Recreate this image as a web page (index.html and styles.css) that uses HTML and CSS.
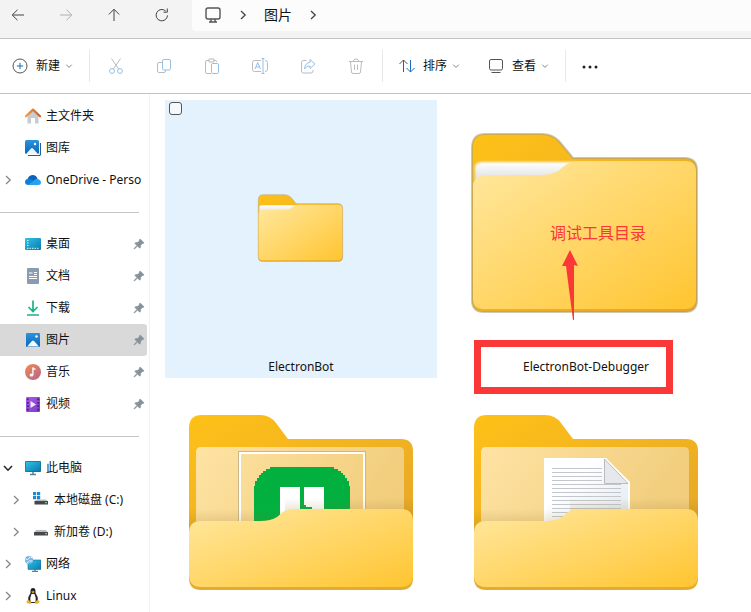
FILE: index.html
```html
<!DOCTYPE html>
<html lang="zh-CN">
<head>
<meta charset="utf-8">
<title>图片</title>
<link rel="stylesheet" href="styles.css">
</head>
<body>
<svg class="defs" aria-hidden="true">
  <defs>
    <linearGradient id="back" x1="0" y1="0" x2="1" y2="1"><stop offset="0" stop-color="#fec117"/><stop offset="1" stop-color="#e5a52a"/></linearGradient>
    <linearGradient id="front" x1="0" y1="0" x2="1" y2="1"><stop offset="0" stop-color="#ffe8a0"/><stop offset="1" stop-color="#ffc530"/></linearGradient>
    <linearGradient id="inner" x1="0" y1="0" x2="1" y2="0.3"><stop offset="0" stop-color="#fee3a4"/><stop offset="1" stop-color="#f1cd7c"/></linearGradient>
    <linearGradient id="shade" x1="0" y1="0" x2="0" y2="1"><stop offset="0" stop-color="#8a6a20" stop-opacity="0"/><stop offset="1" stop-color="#8a6a20" stop-opacity="0.3"/></linearGradient>
    <linearGradient id="strip" x1="0" y1="0" x2="0" y2="1"><stop offset="0" stop-color="#ffffff"/><stop offset="1" stop-color="#dcdcde"/></linearGradient>
    <linearGradient id="sheet" x1="0" y1="0" x2="1" y2="1"><stop offset="0.3" stop-color="#ffffff"/><stop offset="1" stop-color="#dde6f0"/></linearGradient>
    <linearGradient id="blue" x1="0" y1="0" x2="1" y2="1"><stop offset="0" stop-color="#2fc3e8"/><stop offset="1" stop-color="#0b78ae"/></linearGradient>
    <linearGradient id="photo" x1="0" y1="0" x2="0" y2="1"><stop offset="0" stop-color="#2a94df"/><stop offset="1" stop-color="#0c65b3"/></linearGradient>
    <linearGradient id="roof" x1="0" y1="0" x2="1" y2="0"><stop offset="0" stop-color="#f09a4a"/><stop offset="1" stop-color="#c8602c"/></linearGradient>
    <linearGradient id="music" x1="0" y1="0" x2="1" y2="1"><stop offset="0" stop-color="#f08a52"/><stop offset="1" stop-color="#b4648e"/></linearGradient>
    <linearGradient id="film" x1="0" y1="0" x2="1" y2="1"><stop offset="0" stop-color="#a95cec"/><stop offset="1" stop-color="#7a3cc4"/></linearGradient>
    <filter id="soft" x="-10%" y="-30%" width="120%" height="160%"><feGaussianBlur stdDeviation="1"/></filter>

    <symbol id="folder" viewBox="0 0 256 256" overflow="visible">
      <path d="M14 48Q14 34 27 34H84Q94 34 101 41L115 58H228Q239 59 239 70V200Q239 212 227 212H26Q14 212 14 200Z" fill="url(#back)" stroke="#a69a79" stroke-opacity="0.55" stroke-width="2"/>
      <path d="M17 82V68Q17 62 24 62H118V82Z" fill="url(#strip)" filter="url(#soft)"/>
      <path d="M15 84Q17 76 27 75H84Q97 75 104 68Q111 61 120 61H227Q238 61 238 72V198Q238 209 227 209H26Q15 209 15 198Z" fill="url(#front)"/>
    </symbol>
    <symbol id="folder-back" viewBox="0 0 256 256">
      <path d="M16 36Q16 23 29 23H87Q97 23 103 31L115 47H228Q240 47 240 59V150H16Z" fill="url(#back)"/>
      <path d="M23 60Q23 55 28 55H226Q231 55 231 60V145H23Z" fill="url(#inner)"/>
    </symbol>
    <symbol id="folder-front" viewBox="0 0 256 256">
      <path d="M16 117H112V141H16Z" fill="url(#shade)"/>
      <path d="M112 106H240V130H112Z" fill="url(#shade)"/>
      <path d="M16 142H240V186Q240 198 228 198H28Q16 198 16 186Z" fill="#e3ab32"/>
      <path d="M16 141Q16 129 28 129H87Q98 129 104 125L110 120Q114 117 121 117H228Q240 117 240 129V183Q240 195 228 195H28Q16 195 16 183Z" fill="url(#front)"/>
    </symbol>

    <symbol id="right" viewBox="0 0 12 12"><path d="M4 2L8.200 6L4 10" fill="none" stroke="currentColor" stroke-width="1.300"/></symbol>
    <symbol id="down" viewBox="0 0 12 12"><path d="M2 4L6 8.200L10 4" fill="none" stroke="currentColor" stroke-width="1.500"/></symbol>
    <symbol id="pin" viewBox="0 0 12 12"><path d="M7.200 1L11 4.800L10 5.800L9.400 5.600L7.600 7.400L7.400 9.600L6.600 10.200L4.500 8.100L1.500 11L1 10.500L3.900 7.500L1.900 5.500L2.600 4.600L4.800 4.400L6.500 2.600L6.300 2Z" fill="#85919e" stroke="#85919e" stroke-width="0.600"/></symbol>
    <symbol id="monitor" viewBox="0 0 16 16"><path d="M5 14.600H11M8 11V15" stroke="#4e8795" stroke-width="1.500"/><rect y="1" width="16" height="11" rx="1" fill="#176f93"/><rect x="0.700" y="1.700" width="14.600" height="9.600" rx="0.500" fill="url(#blue)"/></symbol>
    <symbol id="drive" viewBox="0 0 16 16"><path d="M3 7H13L15 10H1Z" fill="#b9bbbd"/><rect x="1" y="9" width="14" height="3.500" rx="0.500" fill="#45484b"/><rect x="12" y="10.200" width="2" height="1" fill="#8de0b0"/></symbol>
  </defs>
</svg>

<header class="nav">
  <button class="nav-btn" aria-label="后退"><svg viewBox="0 0 16 16"><path d="M14 8H2.500M7.500 2.800L2.200 8L7.500 13.200"/></svg></button>
  <button class="nav-btn off" aria-label="前进"><svg viewBox="0 0 16 16"><path d="M2 8H13.500M8.500 2.800L13.800 8L8.500 13.200"/></svg></button>
  <button class="nav-btn" aria-label="向上"><svg viewBox="0 0 16 16"><path d="M8 14V2.500M2.800 7.500L8 2.200L13.200 7.500"/></svg></button>
  <button class="nav-btn" aria-label="刷新"><svg viewBox="0 0 16 16"><path d="M13.500 8.400A5.700 5.700 0 1 1 11.700 4M13.300 1.500V5.200H9.500"/></svg></button>
  <nav class="address" aria-label="地址">
    <svg class="pc" viewBox="0 0 18 18"><rect x="2" y="2" width="14" height="11" rx="2"/><path d="M7 13V16M11 13V16M5 16H13"/></svg>
    <svg class="crumb-arrow"><use href="#right"/></svg>
    <a href="#">图片</a>
    <svg class="crumb-arrow"><use href="#right"/></svg>
  </nav>
</header>

<div class="toolbar">
  <button class="menu-btn"><svg class="ico" viewBox="0 0 16 16"><circle cx="8" cy="8" r="7"/><path class="accent" d="M8 4.800V11.200M4.800 8H11.200"/></svg><span>新建</span><svg class="caret"><use href="#down"/></svg></button>
  <span class="divider"></span>
  <div class="tools">
    <button aria-label="剪切"><svg viewBox="0 0 16 16"><path d="M3.500 0.500L10.700 11.200M12.500 0.500L5.300 11.200"/><circle class="tint" cx="4" cy="13" r="2.400"/><circle class="tint" cx="12" cy="13" r="2.400"/></svg></button>
    <button aria-label="复制"><svg viewBox="0 0 16 16"><path d="M6 4.500H3Q1.500 4.500 1.500 6V13Q1.500 14.500 3 14.500H8Q9.500 14.500 9.500 13V12"/><rect class="tint" x="6.500" y="1.500" width="8" height="10.500" rx="1.500"/></svg></button>
    <button aria-label="粘贴"><svg viewBox="0 0 16 16"><path d="M5 2.500H3Q1.500 2.500 1.500 4V14Q1.500 15.500 3 15.500H7M10 2.500H11.500Q12.500 2.500 12.500 4M5 1H10V4H5Z"/><rect class="tint" x="7.500" y="5.500" width="7" height="10" rx="1.200"/></svg></button>
    <button aria-label="重命名"><svg viewBox="0 0 16 16"><path d="M9 2.500H2.500Q0.500 2.500 0.500 4.500V11.500Q0.500 13.500 2.500 13.500H9M13 2.500Q15.500 2.500 15.500 4.500V11.500Q15.500 13.500 13 13.500"/><path class="tint" d="M3 11L5.700 4.500L8.400 11M4 9H7.500M9.500 0.500H12.500M9.500 15.500H12.500M11 0.500V15.500"/></svg></button>
    <button aria-label="共享"><svg viewBox="0 0 16 16"><path d="M6.500 2.500H3.500Q1.500 2.500 1.500 4.500V13Q1.500 15 3.500 15H11Q13 15 13 13V12"/><path class="tint" d="M10 1.500L15 6L10 10.500V8Q6.500 7.500 4.500 11Q5 5 10 4.200Z"/></svg></button>
    <button aria-label="删除"><svg viewBox="0 0 16 16"><path d="M1 3.500H15M5.500 3Q5.500 1 8 1T10.500 3M2.500 4L3.500 14Q3.700 15.500 5 15.500H11Q12.300 15.500 12.500 14L13.500 4M6.500 6.500V12M9.500 6.500V12"/></svg></button>
  </div>
  <span class="divider"></span>
  <button class="menu-btn"><svg class="ico" viewBox="0 0 16 16"><path d="M4.500 14V2M0.500 6L4.500 2L8.500 6"/><path class="accent" d="M11.500 2V14M7.500 10L11.500 14L15.500 10"/></svg><span>排序</span><svg class="caret"><use href="#down"/></svg></button>
  <button class="menu-btn view"><svg class="ico" viewBox="0 0 16 16"><rect x="1.500" y="1.500" width="13" height="10.500" rx="1.500"/><path d="M3.500 14.500H12.500"/></svg><span>查看</span><svg class="caret"><use href="#down"/></svg></button>
  <span class="divider"></span>
  <button class="menu-btn" aria-label="更多"><svg class="dots" viewBox="0 0 16 16"><circle cx="2" cy="9" r="1.500"/><circle cx="8" cy="9" r="1.500"/><circle cx="14" cy="9" r="1.500"/></svg></button>
</div>

<div class="body">
  <nav class="sidebar" aria-label="导航">
    <a class="row" href="#"><span class="twist"></span><svg class="ri" viewBox="0 0 16 16"><path d="M2.500 7L8 2L13.500 7V15.500H10V10H6V15.500H2.500Z" fill="#c8ccd1"/><path d="M1 8.300L8 1.600L15 8.300" fill="none" stroke="url(#roof)" stroke-width="2.200" stroke-linejoin="round" stroke-linecap="round"/></svg><span>主文件夹</span></a>
    <a class="row" href="#"><span class="twist"></span><svg class="ri" viewBox="0 0 16 16"><path d="M3 15.500H14Q15.500 15.500 15.500 14V3" fill="none" stroke="#205f9c" stroke-width="1.200"/><rect width="14" height="14" rx="1.500" fill="url(#photo)"/><circle cx="10" cy="4" r="1.200" fill="#fff"/><path d="M1 14L6 8.500Q7 7.500 8 8.500L13 14Z" fill="#eaf7ff"/></svg><span>图库</span></a>
    <a class="row" href="#"><svg class="twist"><use href="#right"/></svg><svg class="ri" viewBox="0 0 16 16"><path d="M2.500 8Q3 3.500 7.500 3Q11.500 3 12.500 7L8 11Z" fill="#0764b8"/><path d="M3.500 13Q0 13 0 10Q0 7 3.500 6.700Q6 6.400 8 8.500L13 13Z" fill="#137ed8"/><path d="M3 13L10 7.500Q12 6 14 7.500Q16 8.500 16 10.500Q16 13 13 13Z" fill="#27a1ed"/></svg><span>OneDrive - Perso</span></a>
    <hr>
    <a class="row" href="#"><span class="twist"></span><svg class="ri" viewBox="0 0 16 16"><rect y="2" width="16" height="12" rx="1" fill="url(#blue)"/><path d="M2 4.500H3.500M2 7H3.500M2 9.500H3.500M2 12.300H14" stroke="#d9f8ff" stroke-dasharray="1.500 1"/></svg><span>桌面</span><svg class="pin"><use href="#pin"/></svg></a>
    <a class="row" href="#"><span class="twist"></span><svg class="ri" viewBox="0 0 16 16"><rect x="2" width="12" height="16" rx="1" fill="#8a9cb1"/><path d="M4 5H7.500M9 4.500H12M9 6.500H12M4 8.500H12M4 10.500H12" stroke="#fff" stroke-width="1.200"/></svg><span>文档</span><svg class="pin"><use href="#pin"/></svg></a>
    <a class="row" href="#"><span class="twist"></span><svg class="ri" viewBox="0 0 16 16"><path d="M8 0.500V11M3.500 7L8 11.500L12.500 7M2 15H14" fill="none" stroke="#1bb286" stroke-width="1.700"/></svg><span>下载</span><svg class="pin"><use href="#pin"/></svg></a>
    <a class="row current" href="#" aria-current="page"><span class="twist"></span><svg class="ri" viewBox="0 0 16 16"><rect x="1" y="1" width="14" height="14" rx="1" fill="url(#photo)"/><circle cx="11.500" cy="4.500" r="1.200" fill="#fff"/><path d="M2 14.500L7 9Q8 8 9 9L14 14.500Z" fill="#f2faff"/></svg><span>图片</span><svg class="pin"><use href="#pin"/></svg></a>
    <a class="row" href="#"><span class="twist"></span><svg class="ri" viewBox="0 0 16 16"><circle cx="8" cy="8" r="8" fill="url(#music)"/><ellipse cx="6.500" cy="11" rx="1.900" ry="1.600" fill="#fff"/><path d="M7.900 11V3.500Q8.500 5 10.500 5.300" fill="none" stroke="#fff" stroke-width="1.300"/></svg><span>音乐</span><svg class="pin"><use href="#pin"/></svg></a>
    <a class="row" href="#"><span class="twist"></span><svg class="ri" viewBox="0 0 16 16"><rect x="1" y="1" width="14" height="15" rx="1" fill="url(#film)"/><path d="M2.800 2.500V15M13.200 2.500V15" stroke="#45207f" stroke-width="1.800" stroke-dasharray="1.800 1.600"/><path d="M5.500 5V12L11 8.500Z" fill="#f4eaff"/></svg><span>视频</span><svg class="pin"><use href="#pin"/></svg></a>
    <hr>
    <a class="row" href="#"><svg class="twist open"><use href="#down"/></svg><svg class="ri"><use href="#monitor"/></svg><span>此电脑</span></a>
    <a class="row sub" href="#"><svg class="twist"><use href="#right"/></svg><svg class="ri" viewBox="0 0 16 16"><path d="M4 7.500H13L15 9.500H1Z" fill="#b9bbbd"/><rect x="1.500" y="9" width="13.500" height="3.500" fill="#45484b"/><rect x="12" y="10.200" width="2" height="1" fill="#8de0b0"/><path d="M0 0H3.200V3.200H0ZM4 0H7.200V3.200H4ZM0 4H3.200V7.200H0ZM4 4H7.200V7.200H4Z" fill="#1c8acb"/></svg><span>本地磁盘 (C:)</span></a>
    <a class="row sub" href="#"><svg class="twist"><use href="#right"/></svg><svg class="ri" viewBox="0 1 16 16"><use href="#drive" width="16" height="16"/></svg><span>新加卷 (D:)</span></a>
    <a class="row" href="#"><svg class="twist"><use href="#right"/></svg><svg class="ri" viewBox="0 0 16 16"><path d="M7 15.500H13M10 13V15.500" stroke="#4e8795" stroke-width="1.300"/><rect x="3" y="4" width="13" height="9.500" rx="0.500" fill="url(#blue)" stroke="#176f93" stroke-width="0.600"/><circle cx="4" cy="4" r="4" fill="#77b8df"/><path d="M0.500 3Q3 5 4 2Q6 0 7 2M2 7Q4 4 7.500 5" fill="none" stroke="#e2f4ff"/></svg><span>网络</span></a>
    <a class="row" href="#"><svg class="twist"><use href="#right"/></svg><svg class="ri" viewBox="0 0 16 16"><path d="M5.500 3Q5.500 0 8 0T10.500 3V5Q13.500 9 13 13L11 15H5L3 13Q2.500 9 5.500 5Z" fill="#242424"/><path d="M6.500 6H9.500Q11.500 10 10.500 14H5.500Q4.500 10 6.500 6Z" fill="#fff"/><path d="M6.300 3.800L8 3L9.700 3.800L8 5.500ZM1.500 13.500L3.500 11.500L6.500 15Q5 16.500 2 15ZM14.500 13.500L12.500 11.500L9.500 15Q11 16.500 14 15Z" fill="#e9ad2b"/></svg><span>Linux</span></a>
  </nav>

  <main class="files">
    <article class="tile hover">
      <input class="pick" type="checkbox" aria-label="选择 ElectronBot">
      <div class="thumb"><svg class="small" viewBox="0 -5 256 256"><use href="#folder" width="256" height="256"/></svg></div>
      <span class="name">ElectronBot</span>
    </article>
    <article class="tile">
      <div class="thumb"><svg viewBox="0 0 256 256"><use href="#folder" width="256" height="256"/></svg></div>
      <span class="name">ElectronBot-Debugger</span>
      <span class="mark-box"></span>
      <span class="mark-text">调试工具目录</span>
      <svg class="mark-arrow" viewBox="0 0 16 70"><path d="M8 0L16 16L12 15L12 70H11L4 16L0 16Z" fill="#fb3838"/></svg>
    </article>
    <article class="tile">
      <div class="thumb"><svg viewBox="0 0 256 256">
        <use href="#folder-back" width="256" height="256"/>
        <rect x="65.500" y="59.500" width="127" height="80" fill="none" stroke="#c9b78b"/>
        <path d="M67 140V61H191V140" fill="none" stroke="#fff" stroke-width="2"/>
        <path d="M81 140V94H82V89H84V86H86V83H88V81H90V79H93V77H97V75H161V77H165V79H168V81H170V83H172V86H174V89H176V94H177V140Z" fill="#02b040"/>
        <path d="M107 95H127V140H107ZM131 95H151V140H131Z" fill="#fff"/><path d="M130 113H133V115H139V117H130Z" fill="#02b040"/>
        <use href="#folder-front" width="256" height="256"/></svg></div>
    </article>
    <article class="tile">
      <div class="thumb"><svg viewBox="0 0 256 256">
        <use href="#folder-back" width="256" height="256"/>
        <path d="M86 66H148L172 90V140H86Z" fill="#fff"/>
        <path d="M88 67.500H146V92H170V140H88Z" fill="url(#sheet)"/>
        <path d="M94 76.500H144M94 80.500H144M94 84.500H144M94 88.500H144M94 92.500H163M94 96.500H163M94 100.500H163M94 104.500H163M94 108.500H163M94 112.500H163M94 116.500H163M94 120.500H163M94 124.500H163" stroke="#c3c6ca"/>
        <path d="M146.500 67V91.500H170Z" fill="#e6e8eb" stroke="#b9bbbf"/>
        <use href="#folder-front" width="256" height="256"/></svg></div>
    </article>
  </main>
</div>
</body>
</html>
```

FILE: styles.css
```css
* { box-sizing: border-box; }

body {
  margin: 0;
  height: 100vh;
  display: flex;
  flex-direction: column;
  overflow: hidden;
  background: #fff;
  color: #111;
  font: 12px/20px "Noto Sans", "Noto Sans CJK SC", sans-serif;
}

.defs { position: absolute; width: 0; height: 0; }
svg { display: block; flex: none; }
a { color: inherit; text-decoration: none; }

button {
  display: flex;
  align-items: center;
  justify-content: center;
  padding: 0;
  border: 0;
  background: none;
  color: inherit;
  font: inherit;
}

/* Navigation bar */
.nav {
  display: flex;
  flex: none;
  gap: 12px;
  padding-bottom: 7px;
  background: #f3f3f3;
  border-bottom: 1px solid #c3c3c3;
}
.nav-btn { width: 36px; height: 30px; }
.nav-btn svg { width: 16px; height: 16px; fill: none; stroke: #444; }
.nav-btn.off svg { stroke: #b0b0b0; }
.address {
  display: flex;
  flex: 1;
  align-items: center;
  height: 31px;
  padding: 0 0 1px 12px;
  background: #fcfcfc;
  border-bottom-left-radius: 4px;
  font-size: 14px;
}
.pc { width: 18px; height: 18px; fill: none; stroke: #555; stroke-width: 1.4; }
.crumb-arrow { width: 12px; height: 12px; margin: 0 15px; color: #444; }

/* Command bar */
.toolbar {
  display: flex;
  flex: none;
  align-items: center;
  height: 55px;
  padding-left: 12px;
  border-bottom: 1px solid #c3c3c3;
}
.ico, .dots { width: 16px; height: 16px; }
.ico { margin-right: 8px; fill: none; stroke: #555; }
.accent { stroke: #1a6fc4; }
.caret { width: 8px; height: 8px; margin-left: 5px; color: #888; }
.view { margin-left: 28px; }
.divider { width: 1px; height: 32px; margin: 0 16px; background: #e8e8e8; }
.tools { display: flex; gap: 24px; margin: 0 -2px; }
.tools button { width: 24px; height: 24px; }
.tools svg { width: 16px; height: 16px; fill: none; stroke: #b9bbbd; }
.tools .tint { stroke: #92c0e8; }
.dots { fill: #222; }

/* Sidebar */
.body { display: flex; flex: 1; min-height: 0; }
.sidebar {
  flex: none;
  width: 150px;
  padding: 6px 2px 0 0;
  border-right: 1px solid #f2f2f2;
  overflow: hidden;
}
.row {
  display: flex;
  align-items: center;
  height: 32px;
  padding: 0 2px;
  border-radius: 0 3px 3px 0;
  white-space: nowrap;
}
.row.sub { padding-left: 10px; }
.row.current { background: #d9d9d9; }
.twist { flex: none; width: 12px; height: 12px; margin-right: 11px; color: #888; }
.twist.open { color: #222; }
.ri { width: 16px; height: 16px; margin-right: 5px; }
.pin { width: 12px; height: 12px; margin-left: auto; }
.sidebar hr {
  height: 1px;
  margin: 16px 8px 15px 0;
  border: 0;
  background: #c4c4c4;
}

/* File grid */
.files {
  display: grid;
  flex: 1;
  grid-template-columns: repeat(auto-fill, 272px);
  grid-auto-rows: 278px;
  gap: 14px 13px;
  padding: 6px 15px 0;
  overflow: hidden;
}
.tile {
  position: relative;
  display: flex;
  flex-direction: column;
  align-items: center;
}
.tile.hover { background: #e4f2fd; }
.thumb { display: grid; place-items: center; width: 256px; height: 256px; }
.thumb svg { width: 256px; height: 256px; }
.thumb .small { width: 96px; height: 96px; }
.name { line-height: 22px; }
.pick {
  position: absolute;
  top: 2px;
  left: 4px;
  width: 13px;
  height: 13px;
  margin: 0;
  appearance: none;
  border: 1px solid #555;
  border-radius: 3px;
  background: #f6f9fc;
}

/* Annotations over the debugger folder */
.mark-box {
  position: absolute;
  top: 240px;
  left: 24px;
  width: 199px;
  height: 54px;
  border: 7px solid #fb3838;
}
.mark-text {
  position: absolute;
  top: 123px;
  left: 100px;
  color: #fb3838;
  font-size: 16px;
}
.mark-arrow {
  position: absolute;
  top: 150px;
  left: 112px;
  width: 16px;
  height: 70px;
}
```
